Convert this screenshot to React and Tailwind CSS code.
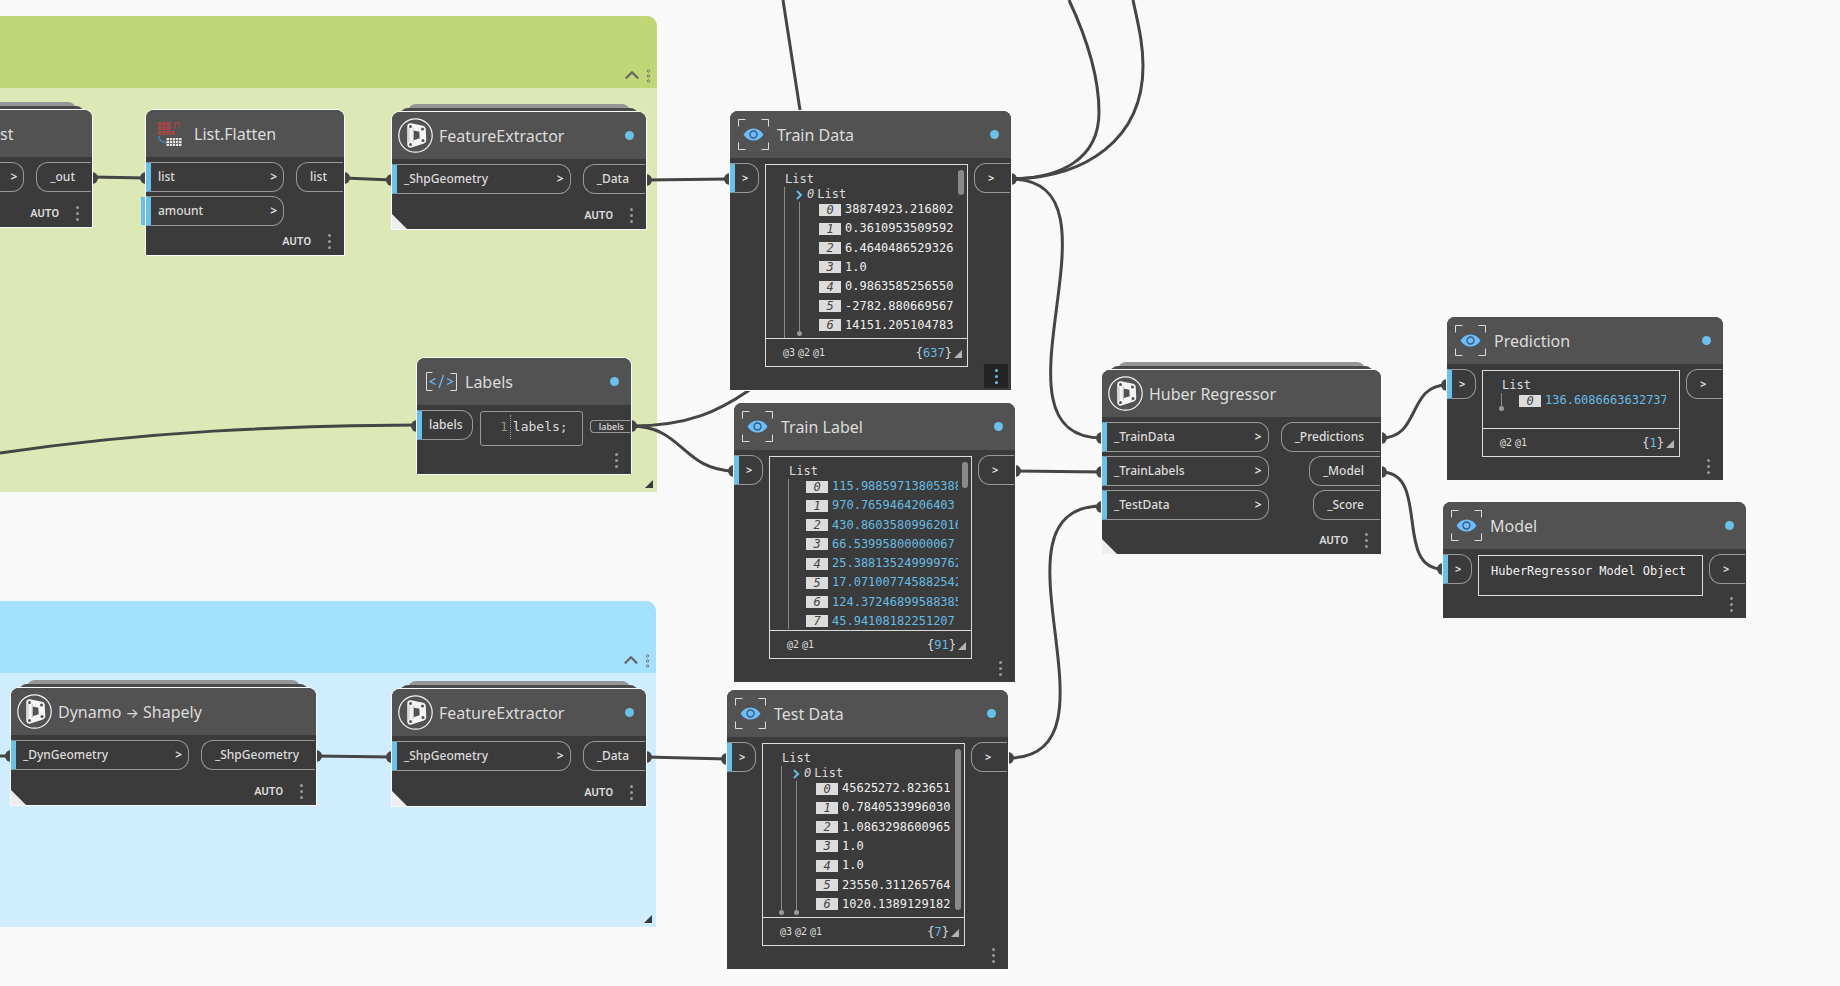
import { ChevronUp } from "lucide-react";

const trainData = [
  "38874923.216802",
  "0.3610953509592",
  "6.4640486529326",
  "1.0",
  "0.9863585256550",
  "-2782.880669567",
  "14151.205104783",
];

const trainLabels = [
  "115.98859713805388",
  "970.7659464206403",
  "430.86035809962016",
  "66.53995800000067",
  "25.388135249999762",
  "17.071007745882542",
  "124.37246899588385",
  "45.94108182251207",
];

const testData = [
  "45625272.823651",
  "0.7840533996030",
  "1.0863298600965",
  "1.0",
  "1.0",
  "23550.311265764",
  "1020.1389129182",
];

const wires = [
  "M92 177 L146 178",
  "M344 178 L392 180",
  "M646 180 L730 179",
  "M0 453 C150 431 280 426 417 425",
  "M631 426 C690 426 720 410 748 391 C812 345 822 260 800 110 L783 0",
  "M631 426 C683 426 682 470 734 471",
  "M1069 0 C1083 30 1099 72 1099 112 C1099 160 1060 178 1011 179",
  "M1133 0 C1138 24 1143 42 1143 66 C1143 140 1085 178 1011 179",
  "M1011 179 C1136 179 977 438 1102 438",
  "M1015 471 L1102 472",
  "M1008 758 C1133 758 977 506 1102 506",
  "M1381 438 C1421 438 1407 385 1447 385",
  "M1381 472 C1431 472 1393 569 1443 569",
  "M0 756 L11 756",
  "M316 756 L392 757",
  "M646 757 L727 759",
];

const plugs = [
  [92, 178], [146, 178], [344, 178], [392, 180], [646, 180], [730, 179],
  [417, 426], [631, 426], [734, 471], [1011, 179], [1015, 471], [1102, 438],
  [1102, 472], [1102, 507], [1381, 438], [1381, 472], [1447, 385], [1443, 569],
  [11, 756], [316, 756], [392, 757], [646, 757], [727, 759], [1008, 758],
];

function Wires() {
  return (
    <svg className="absolute inset-0 h-full w-full" fill="none" aria-hidden="true">
      {wires.map((d) => (
        <path key={d} d={d} stroke="#454545" strokeWidth="3" />
      ))}
      {plugs.map(([x, y]) => (
        <circle key={`${x}-${y}`} cx={x} cy={y} r="6" fill="#454545" />
      ))}
    </svg>
  );
}

function EyeIcon() {
  return (
    <svg width="31" height="31" viewBox="0 0 31 31" fill="none" className="shrink-0">
      <path
        d="M.5 7.5V.5h7M23.5.5h7v7M30.5 23.5v7h-7M7.5 30.5h-7v-7"
        stroke="#dcdcdc"
      />
      <path
        d="M5.5 15.500C8 11.500 11.500 9.500 15.500 9.500S23 11.500 25.500 15.500C23 19.500 19.500 21.500 15.500 21.500S8 19.500 5.500 15.500Z"
        fill="#6bbfff"
      />
      <circle cx="15.500" cy="15.500" r="3.500" stroke="#46586a" strokeWidth="1.400" />
    </svg>
  );
}

function DynamoIcon() {
  return (
    <svg width="35" height="35" viewBox="0 0 35 35" fill="none" className="shrink-0">
      <circle cx="17.500" cy="17.500" r="16.700" stroke="#f4f4f4" strokeWidth="1.200" />
      <path
        d="M12.500 8.500 24.500 11 25 22.500 12.500 26.500Z"
        stroke="#f4f4f4"
        strokeWidth="6.500"
        strokeLinejoin="round"
      />
      <path d="M11 10.500V24.500M15.300 10.500V24" stroke="#9a9a9a" strokeWidth=".6" />
      <circle cx="12.500" cy="8.500" r="1.500" fill="#505050" />
      <circle cx="24.500" cy="11" r="1.500" fill="#505050" />
      <circle cx="25" cy="22.500" r="1.500" fill="#505050" />
      <circle cx="12.500" cy="26.500" r="1.500" fill="#505050" />
    </svg>
  );
}

function CodeIcon() {
  return (
    <svg width="31" height="19" viewBox="0 0 31 19" fill="none" className="shrink-0">
      <path d="M6.500.5h-6v18h6M24.500 1.500h6v17h-6" stroke="#dcdcdc" />
      <path
        d="M9.500 6.500 4 9.500l5.500 3M21 6.500l5.500 3-5.500 3M17.500 3l-4.500 13"
        stroke="#6bbfff"
        strokeWidth="1.200"
      />
    </svg>
  );
}

function FlattenIcon() {
  const cells = [
    [0, 0], [4.5, 0], [9, 0],
    [0, 4.5], [4.5, 4.5], [9, 4.5],
    [0, 9], [4.5, 9], [9, 9], [13.5, 9],
  ];
  return (
    <svg width="24" height="24" viewBox="0 0 24 24" fill="none" className="shrink-0">
      {cells.map(([x, y]) => (
        <rect key={`${x}-${y}`} x={x + 0.6} y={y + 0.6} width="2.400" height="2.400" stroke="#b64545" strokeWidth="1.300" />
      ))}
      <path d="M17 7V1h4.500v6" stroke="#a04848" strokeWidth="1.300" />
      <path d="M.8 14c.5 4 3 6.500 7.200 6.500" stroke="#4a86b8" strokeWidth="1.600" />
      <rect x="8.500" y="16" width="15" height="8" fill="#e4e4e4" />
      <path
        d="M8.500 18.500h15M8.500 21.500h15M11.500 16v8M14.500 16v8M17.500 16v8M20.500 16v8"
        stroke="#666"
        strokeWidth=".9"
      />
    </svg>
  );
}

function Dots({ active }) {
  return (
    <button
      aria-label="Node options"
      className={`mr-px flex h-7 w-7 flex-col items-center justify-center gap-[3px] rounded-sm ${active ? "border-2 border-[#3b3b3b] bg-[#232323] text-[#6ac0e7]" : "text-[#999999]"}`}
    >
      <span className="h-[3px] w-[3px] rounded-full bg-current"></span>
      <span className="h-[3px] w-[3px] rounded-full bg-current"></span>
      <span className="h-[3px] w-[3px] rounded-full bg-current"></span>
    </button>
  );
}

function InPort({ label, chevron = true, extra, className = "" }) {
  return (
    <button
      aria-label={label ? undefined : "Input"}
      className={`relative flex h-[30px] items-center rounded-r-[12px] border border-l-5 border-[#999999] border-l-[#6ac0e7] text-xs font-medium ${className}`}
    >
      {extra && (
        <span className="absolute -left-[10px] top-0 h-7 w-1 bg-[#6ac0e7]"></span>
      )}
      {label}
      {chevron && (
        <span className={`font-bold ${label === undefined ? "text-[11px]" : "ml-auto text-xs"}`}>&gt;</span>
      )}
    </button>
  );
}

function OutPort({ label }) {
  return (
    <button
      aria-label={label ? undefined : "Output"}
      className={`mr-px flex h-[30px] shrink-0 items-center rounded-l-[12px] border border-r-0 border-[#999999] text-xs font-medium ${label ? "pl-[13px] pr-4" : "w-9 pl-[13px]"}`}
    >
      {label || <span className="text-[11px] font-bold">&gt;</span>}
    </button>
  );
}

function Node({ title, icon, place, pad = "pl-2 gap-2", status, stacked, corner, auto, active, children }) {
  return (
    <section className={`absolute ${place}`}>
      {stacked && (
        <>
          <div className="absolute -top-2 left-4 right-4 h-4 rounded-t-lg bg-[#969696]"></div>
          <div className="absolute -top-1 left-2 right-2 h-4 rounded-t-lg bg-[#4a4a4a]"></div>
        </>
      )}
      <div className="relative flex h-full flex-col rounded-t-lg bg-[#3b3b3b] ring-1 ring-[#fafafa]">
        <header className={`flex h-[47px] shrink-0 items-center rounded-t-lg bg-[#525252] pr-3 ${pad}`}>
          {icon}
          <h2 className="text-base whitespace-nowrap">{title}</h2>
          {status && <span className="ml-auto h-[9px] w-[9px] rounded-full bg-[#6ac0e7]"></span>}
        </header>
        <div className="flex-1 pt-[5px]">{children}</div>
        <footer className="absolute bottom-0 right-0 flex h-7 items-center gap-1">
          {auto && (
            <span className="pt-[2px] font-['Roboto',sans-serif] text-[11px] font-semibold">AUTO</span>
          )}
          <Dots active={active} />
        </footer>
        {corner && (
          <svg width="15" height="15" className="absolute bottom-0 left-0" aria-hidden="true">
            <path d="M0 0 15 15H0Z" fill="#eeeeee" />
          </svg>
        )}
      </div>
    </section>
  );
}

// Node whose inputs stretch next to a column of outputs
function PortNode({ inputs, outputs, extraPort, ...rest }) {
  return (
    <Node {...rest}>
      <div className="grid grid-cols-[1fr_auto] gap-x-3">
        <div className="flex flex-col gap-1">
          {inputs.map((name) => (
            <InPort key={name} label={name} extra={name === extraPort} className="pr-[6px] pl-[7px]" />
          ))}
        </div>
        <div className="flex flex-col items-end gap-1">
          {outputs.map((name) => (
            <OutPort key={name} label={name} />
          ))}
        </div>
      </div>
    </Node>
  );
}

function Items({ values, blue }) {
  return (
    <ol className="flex h-full flex-col justify-between">
      {values.map((value, i) => (
        <li key={i} className="flex h-[15px] items-center gap-1 leading-[15px] whitespace-nowrap">
          <span className="h-3 w-[22px] shrink-0 bg-[#dcdcdc] text-center leading-3 text-[#444444] italic">
            {i}
          </span>
          <span className={blue ? "text-[#66bce4]" : "text-[#f0f0f0]"}>{value}</span>
        </li>
      ))}
    </ol>
  );
}

function EndDot() {
  return <span className="absolute -bottom-[2px] -left-[3px] h-[5px] w-[5px] rounded-full bg-[#999999]"></span>;
}

function ListView({ values, nested, levels, count, bodyHeight, listHeight, end, thumb }) {
  return (
    <div className="flex min-w-0 flex-1 flex-col border border-[#dcdcdc] font-['DejaVu_Sans_Mono',monospace] text-xs">
      <div className={`flex ${bodyHeight}`}>
        <div className="flex min-w-0 flex-1 flex-col overflow-hidden pt-[7px] pl-[18px]">
          <p className="pl-px leading-[15px]">List</p>
          {nested ? (
            <div className={`relative border-l border-[#888888] ${end ? "mb-1" : ""} flex-1`}>
              <div className="flex h-[15px] items-center pl-[11px] leading-[15px]">
                <svg width="7" height="10" viewBox="0 0 7 10" fill="none" className="mr-[4px]">
                  <path d="M1 1l4 4-4 4" stroke="#66bce4" strokeWidth="2" />
                </svg>
                <span className="mr-[3px] italic">0</span>
                <span>List</span>
              </div>
              <div className={`relative ml-[14px] border-l border-[#888888] pb-px pl-[19px] ${listHeight}`}>
                <Items values={values} />
                <EndDot />
              </div>
              {end && <EndDot />}
            </div>
          ) : (
            <div className={`relative border-l border-[#888888] pl-[17px] ${listHeight}`}>
              <Items values={values} blue />
              {end && <EndDot />}
            </div>
          )}
        </div>
        <div className="mt-[5px] mr-[3px] ml-1 w-[6px] shrink-0">
          {thumb && <div className={`rounded-full bg-[#8a8a8a] ${thumb}`}></div>}
        </div>
      </div>
      <div className="flex h-7 items-center border-t border-[#dcdcdc] pr-[5px] pl-[17px]">
        <span className="flex gap-[3px] text-[10px]">
          {levels.map((level) => (
            <span key={level}>{level}</span>
          ))}
        </span>
        <span className="ml-auto">
          {"{"}
          <span className="text-[#66bce4]">{count}</span>
          {"}"}
        </span>
        <svg width="8" height="8" className="mt-[2px] ml-[2px]" aria-hidden="true">
          <path d="M8 0V8H0Z" fill="#b4b4b4" />
        </svg>
      </div>
    </div>
  );
}

function WatchNode({ children, ...rest }) {
  return (
    <Node icon={<EyeIcon />} status {...rest}>
      <div className="flex items-start gap-[6px]">
        <InPort className="w-[29px] pl-[7px]" />
        <div className="mt-px flex min-w-0 flex-1">{children}</div>
        <OutPort />
      </div>
    </Node>
  );
}

function Group({ place, header, body }) {
  return (
    <section className={`absolute left-0 flex flex-col overflow-hidden rounded-tr-[10px] ${place} ${body}`}>
      <header className={`flex h-[72px] shrink-0 items-end justify-end gap-[3px] pr-[6px] pb-[2px] ${header}`}>
        <button aria-label="Collapse group" className="text-[#666666]">
          <ChevronUp size={22} strokeWidth={2.5} />
        </button>
        <button aria-label="Group options" className="pb-[3px]">
          <svg width="5" height="14" viewBox="0 0 5 14" fill="none" stroke="#777777">
            <circle cx="2.500" cy="2" r="1.200" />
            <circle cx="2.500" cy="7" r="1.200" />
            <circle cx="2.500" cy="12" r="1.200" />
          </svg>
        </button>
      </header>
      <svg width="8" height="8" className="mt-auto mr-1 mb-1 ml-auto" aria-hidden="true">
        <path d="M8 0V8H0Z" fill="#3b3b3b" />
      </svg>
    </section>
  );
}

export default function App() {
  return (
    <main className="relative min-h-screen w-full overflow-hidden bg-[#f9f9f9] font-['Noto_Sans',sans-serif] text-[#dcdcdc]">
      <Group place="top-4 h-[476px] w-[657px]" header="bg-[#c1d676]" body="bg-[#dce8b6]" />
      <Group place="top-[601px] h-[326px] w-[656px]" header="bg-[#a3e1ff]" body="bg-[#d0ecff]" />
      <Wires />

      <PortNode
        title="st"
        place="-left-[137px] top-[110px] h-[117px] w-[229px]"
        pad="pl-[137px]"
        inputs={[""]}
        outputs={["_out"]}
        stacked
        auto
      />
      <PortNode
        title="List.Flatten"
        icon={<FlattenIcon />}
        place="left-[146px] top-[110px] h-[145px] w-[198px]"
        pad="pl-3 gap-3"
        inputs={["list", "amount"]}
        outputs={["list"]}
        extraPort="amount"
        auto
      />
      <PortNode
        title="FeatureExtractor"
        icon={<DynamoIcon />}
        place="left-[392px] top-[112px] h-[117px] w-[254px]"
        pad="pl-[6px] gap-[6px]"
        inputs={["_ShpGeometry"]}
        outputs={["_Data"]}
        status
        stacked
        corner
        auto
      />

      <Node
        title="Labels"
        icon={<CodeIcon />}
        place="left-[417px] top-[358px] h-[116px] w-[214px]"
        pad="pl-[9px] gap-[8px]"
        status
      >
        <div className="flex items-start">
          <InPort label="labels" chevron={false} className="w-14 pl-[7px]" />
          <label className="mt-px ml-[7px] flex h-[35px] w-[103px] items-center rounded-[3px] border border-[#999999] pb-1 pl-[19px] font-['DejaVu_Sans_Mono',monospace] text-[13px]">
            <span className="text-[#9a9070]">1</span>
            <input
              aria-label="Code"
              defaultValue="labels;"
              className="ml-[2px] h-6 w-16 border-l border-dotted border-[#999999] pl-[2px] outline-none"
            />
          </label>
          <button className="mt-[10px] mr-px ml-auto flex h-[13px] items-center rounded-l-sm border border-r-0 border-[#999999] pr-[6px] pl-2 text-[9px] font-medium">
            labels
          </button>
        </div>
      </Node>

      <PortNode
        title={
          <>
            Dynamo <span className="font-['Inter',sans-serif] text-sm">→</span> Shapely
          </>
        }
        icon={<DynamoIcon />}
        place="left-[11px] top-[688px] h-[117px] w-[305px]"
        pad="pl-[6px] gap-[6px]"
        inputs={["_DynGeometry"]}
        outputs={["_ShpGeometry"]}
        stacked
        corner
        auto
      />
      <PortNode
        title="FeatureExtractor"
        icon={<DynamoIcon />}
        place="left-[392px] top-[689px] h-[117px] w-[254px]"
        pad="pl-[6px] gap-[6px]"
        inputs={["_ShpGeometry"]}
        outputs={["_Data"]}
        status
        stacked
        corner
        auto
      />
      <PortNode
        title="Huber Regressor"
        icon={<DynamoIcon />}
        place="left-[1102px] top-[370px] h-[184px] w-[279px]"
        pad="pl-[6px] gap-[6px]"
        inputs={["_TrainData", "_TrainLabels", "_TestData"]}
        outputs={["_Predictions", "_Model", "_Score"]}
        stacked
        corner
        auto
      />

      <WatchNode title="Train Data" place="left-[730px] top-[111px] h-[279px] w-[281px]" active>
        <ListView
          values={trainData}
          nested
          levels={["@3", "@2", "@1"]}
          count={637}
          bodyHeight="h-[173px]"
          listHeight="h-[132px]"
          thumb="h-[25px]"
        />
      </WatchNode>
      <WatchNode title="Train Label" place="left-[734px] top-[403px] h-[279px] w-[281px]">
        <ListView
          values={trainLabels}
          levels={["@2", "@1"]}
          count={91}
          bodyHeight="h-[173px]"
          listHeight="h-[150px]"
          thumb="h-[26px]"
        />
      </WatchNode>
      <WatchNode title="Test Data" place="left-[727px] top-[690px] h-[279px] w-[281px]">
        <ListView
          values={testData}
          nested
          levels={["@3", "@2", "@1"]}
          count={7}
          bodyHeight="h-[173px]"
          listHeight="h-[132px]"
          thumb="h-[161px]"
          end
        />
      </WatchNode>
      <WatchNode title="Prediction" place="left-[1447px] top-[317px] h-[163px] w-[276px]">
        <ListView
          values={["136.6086663632737"]}
          levels={["@2", "@1"]}
          count={1}
          bodyHeight="h-[57px]"
          listHeight="h-[16px]"
          end
        />
      </WatchNode>
      <WatchNode title="Model" place="left-[1443px] top-[502px] h-[116px] w-[303px]">
        <p className="h-[41px] flex-1 border border-[#dcdcdc] pt-[7px] pl-3 font-['DejaVu_Sans_Mono',monospace] text-xs leading-4 whitespace-nowrap text-[#f0f0f0]">
          HuberRegressor Model Object
        </p>
      </WatchNode>
    </main>
  );
}
